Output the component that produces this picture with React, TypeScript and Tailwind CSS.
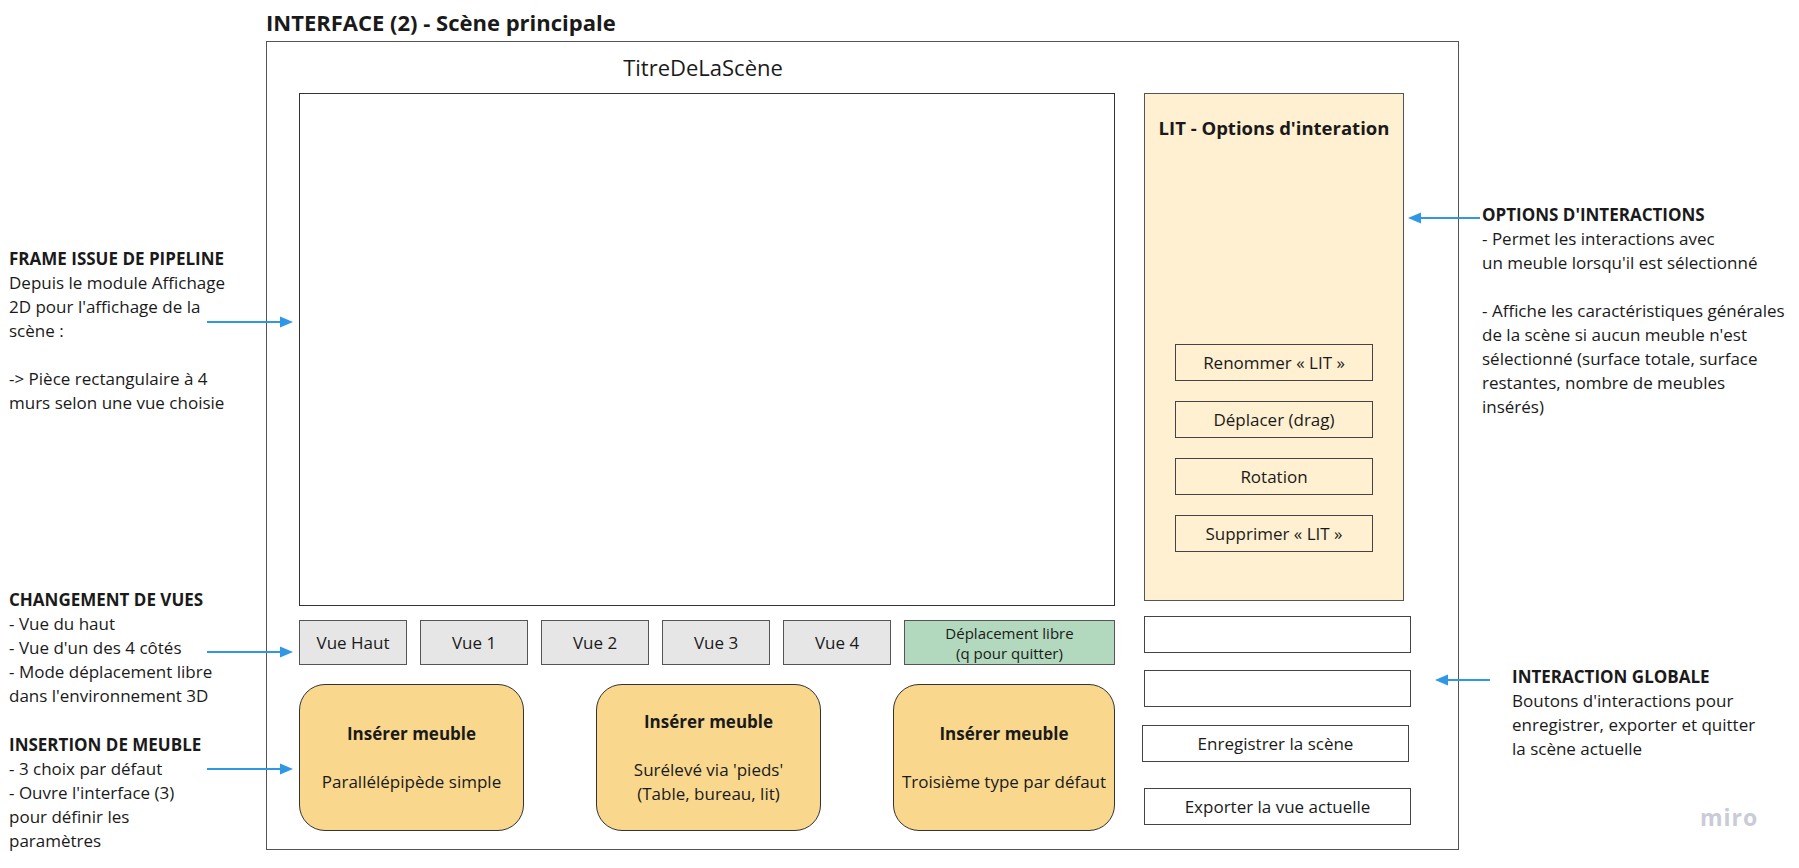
import React from 'react';

const ARROW = '#3097e6';

// horizontal arrow drawn on the board, head on the chosen side
const Arrow: React.FC<{ x: number; y: number; w: number; dir: 'left' | 'right' }> = ({ x, y, w, dir }) => (
  <svg
    className="absolute"
    style={{ left: x, top: y - 7 }}
    width={w}
    height={14}
    viewBox={`0 0 ${w} 14`}
  >
    {dir === 'right' ? (
      <>
        <line x1={0} y1={7} x2={w - 10} y2={7} stroke={ARROW} strokeWidth={2.2} />
        <polygon points={`${w - 13},1.5 ${w},7 ${w - 13},12.5`} fill={ARROW} />
      </>
    ) : (
      <>
        <line x1={10} y1={7} x2={w} y2={7} stroke={ARROW} strokeWidth={2.2} />
        <polygon points="13,1.5 0,7 13,12.5" fill={ARROW} />
      </>
    )}
  </svg>
);

const Note: React.FC<{ x: number; y: number; title: string; lines: string[] }> = ({ x, y, title, lines }) => (
  <div className="absolute text-[17px] leading-[24px] text-[#1a1a1a] whitespace-nowrap" style={{ left: x, top: y }}>
    <div className="font-bold">{title}</div>
    {lines.map((l, i) => (
      <div key={i} className="h-[24px]">{l}</div>
    ))}
  </div>
);

const ViewButton: React.FC<{ label: string }> = ({ label }) => (
  <div className="w-[108px] h-full bg-[#e6e6e6] border border-[#555] flex items-center justify-center text-[17px] text-[#1a1a1a]">
    {label}
  </div>
);

const InsertCard: React.FC<{ sub: string[]; w?: string }> = ({ sub, w = 'w-[225px]' }) => (
  <div className={`${w} h-full bg-[#f9d88e] border border-[#333] rounded-[26px] flex flex-col items-center justify-center text-[17px] leading-[24px] text-[#1a1a1a]`}>
    <div className="font-bold">Insérer meuble</div>
    <div className="mt-[24px] text-center">
      {sub.map((s, i) => (
        <div key={i}>{s}</div>
      ))}
    </div>
  </div>
);

const OptionButton: React.FC<{ label: string }> = ({ label }) => (
  <div className="w-[198px] h-[37px] border border-[#444] flex items-center justify-center text-[17px] text-[#1a1a1a]">
    {label}
  </div>
);

const PlainBox: React.FC<{ label?: string; className?: string }> = ({ label, className = '' }) => (
  <div className={`w-[267px] h-[37px] bg-white border border-[#444] flex items-center justify-center text-[17px] text-[#1a1a1a] ${className}`}>
    {label}
  </div>
);

export default function App() {
  return (
    <div className="relative w-[1799px] h-[868px] bg-white overflow-hidden font-['Open_Sans',sans-serif] text-[#1a1a1a]">
      <div className="pl-[266px] pt-[8px]">
        <h1 className="h-[28px] text-[22px] leading-[28px] font-bold">INTERFACE (2) - Scène principale</h1>

        <div className="mt-[5px] w-[1193px] h-[809px] border-[1.5px] border-[#555] flex pl-[32px]">
          {/* left column: scene, views, furniture */}
          <div className="w-[816px] flex flex-col">
            <div className="h-[51px] flex items-center justify-center text-[22px] pr-[8px]">TitreDeLaScène</div>
            <div className="h-[513px] border border-[#333]" />

            <div className="mt-[14px] h-[45px] flex gap-[13px]">
              <ViewButton label="Vue Haut" />
              <ViewButton label="Vue 1" />
              <ViewButton label="Vue 2" />
              <ViewButton label="Vue 3" />
              <ViewButton label="Vue 4" />
              <div className="flex-1 h-full bg-[#b2d8bd] border border-[#555] flex flex-col items-center justify-center text-[15px] leading-[20px]">
                <div>Déplacement libre</div>
                <div>(q pour quitter)</div>
              </div>
            </div>

            <div className="mt-[19px] h-[147px] flex justify-between">
              <InsertCard sub={['Parallélépipède simple']} />
              <InsertCard sub={["Surélevé via 'pieds'", '(Table, bureau, lit)']} />
              <InsertCard sub={['Troisième type par défaut']} w="w-[222px]" />
            </div>
          </div>

          {/* right column: options + global actions */}
          <div className="ml-[29px] w-[267px] flex flex-col pt-[51px]">
            <div className="w-[260px] h-[508px] bg-[#fff0d1] border border-[#555] flex flex-col items-center pt-[21px] pb-[48px]">
              <div className="text-[18.5px] leading-[26px] font-bold">LIT - Options d'interation</div>
              <div className="mt-auto flex flex-col gap-[20px]">
                <OptionButton label="Renommer « LIT »" />
                <OptionButton label="Déplacer (drag)" />
                <OptionButton label="Rotation" />
                <OptionButton label="Supprimer « LIT »" />
              </div>
            </div>
            <PlainBox className="mt-[15px] h-[36px]" />
            <PlainBox className="mt-[17px]" />
            <PlainBox className="mt-[18px] -ml-[2px]" label="Enregistrer la scène" />
            <PlainBox className="mt-[26px]" label="Exporter la vue actuelle" />
          </div>
        </div>
      </div>

      {/* annotations on the board */}
      <Note
        x={9}
        y={247}
        title="FRAME ISSUE DE PIPELINE"
        lines={["Depuis le module Affichage", "2D pour l'affichage de la", 'scène :', '', '-> Pièce rectangulaire à 4', 'murs selon une vue choisie']}
      />
      <Note
        x={9}
        y={588}
        title="CHANGEMENT DE VUES"
        lines={['- Vue du haut', "- Vue d'un des 4 côtés", '- Mode déplacement libre', "dans l'environnement 3D"]}
      />
      <Note
        x={9}
        y={733}
        title="INSERTION DE MEUBLE"
        lines={['- 3 choix par défaut', "- Ouvre l'interface (3)", 'pour définir les', 'paramètres']}
      />
      <Note
        x={1482}
        y={203}
        title="OPTIONS D'INTERACTIONS"
        lines={[
          '- Permet les interactions avec',
          "un meuble lorsqu'il est sélectionné",
          '',
          '- Affiche les caractéristiques générales',
          "de la scène si aucun meuble n'est",
          'sélectionné (surface totale, surface',
          'restantes, nombre de meubles',
          'insérés)',
        ]}
      />
      <Note
        x={1512}
        y={665}
        title="INTERACTION GLOBALE"
        lines={["Boutons d'interactions pour", 'enregistrer, exporter et quitter', 'la scène actuelle']}
      />

      <Arrow x={207} y={322} w={86} dir="right" />
      <Arrow x={207} y={652} w={86} dir="right" />
      <Arrow x={207} y={769} w={86} dir="right" />
      <Arrow x={1408} y={218} w={72} dir="left" />
      <Arrow x={1435} y={680} w={55} dir="left" />

      <div className="absolute left-[1700px] top-[802px] text-[23px] leading-[30px] font-bold tracking-[1px] text-[#c9cbd7]">
        miro
      </div>
    </div>
  );
}
